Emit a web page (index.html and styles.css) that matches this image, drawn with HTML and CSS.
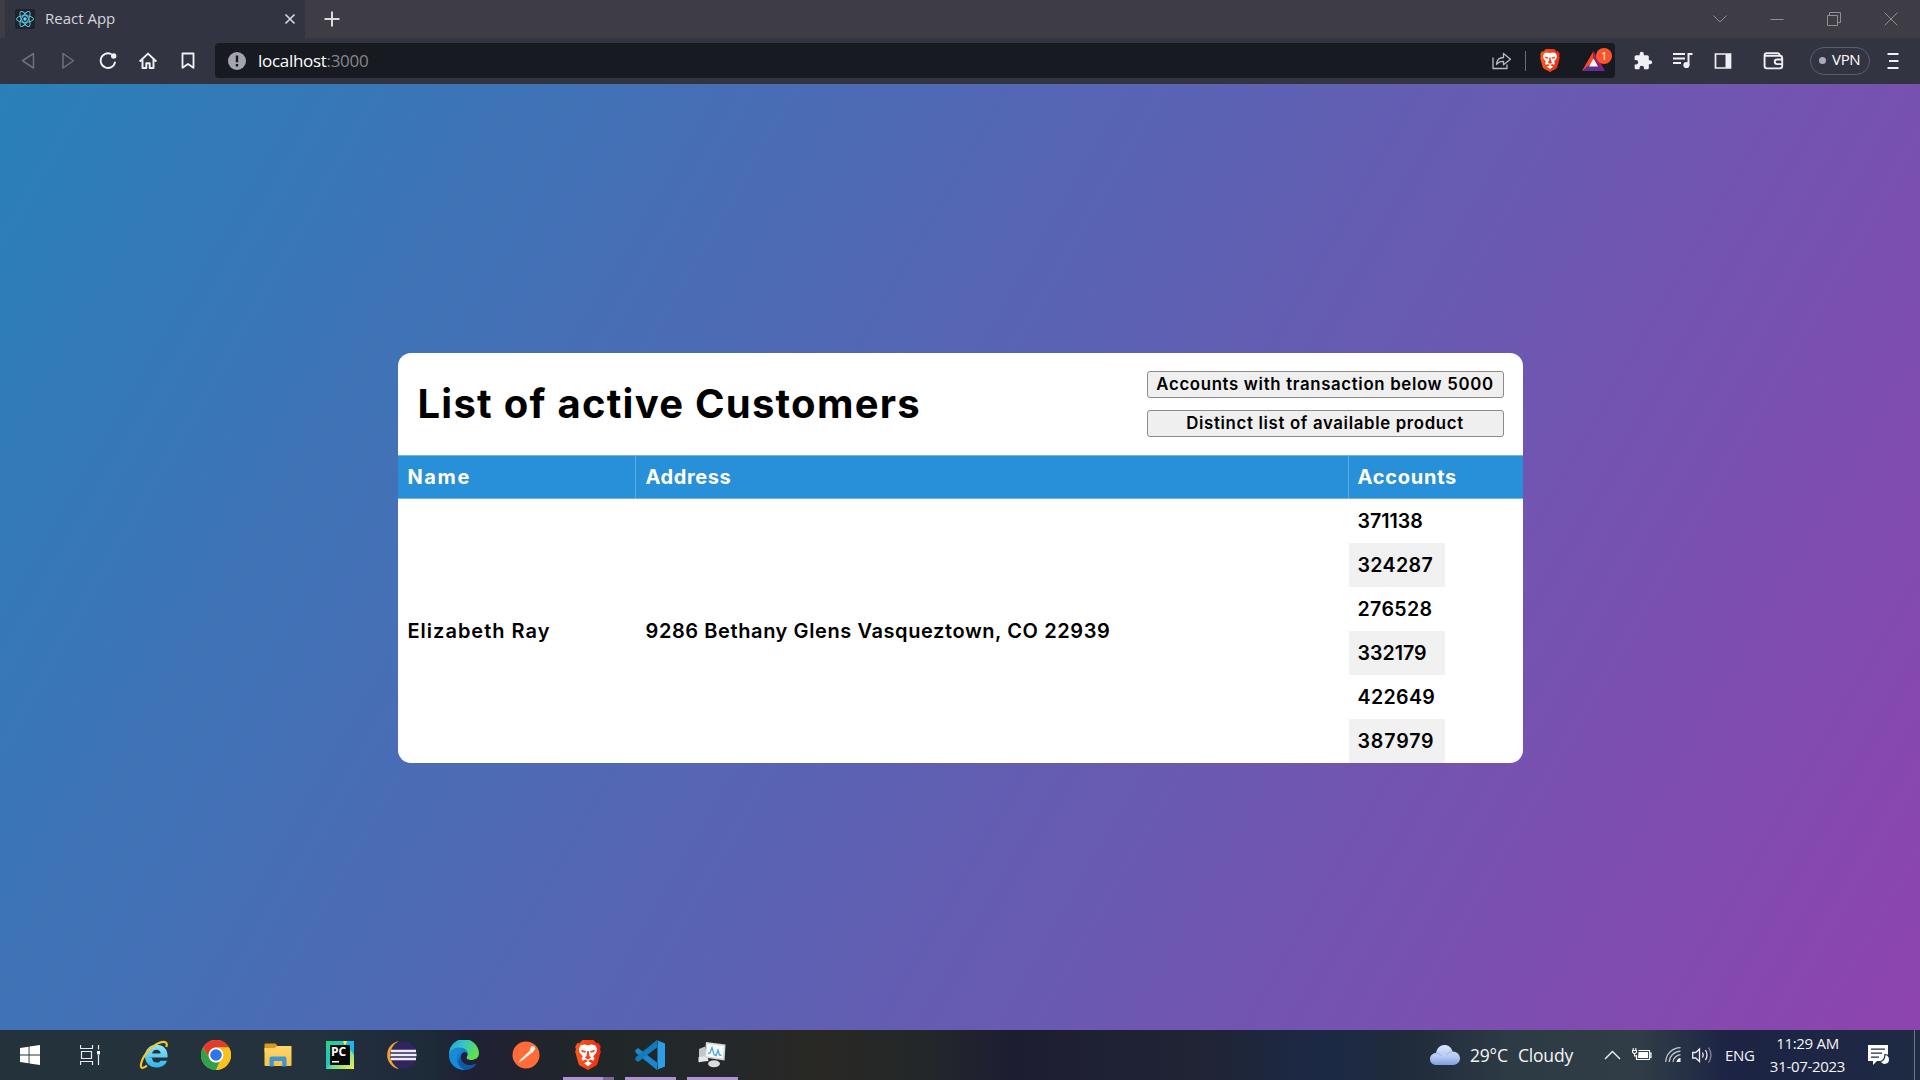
FILE: index.html
```
<!DOCTYPE html>
<html lang="en">
<head>
<meta charset="utf-8">
<title>React App</title>
<link rel="stylesheet" href="styles.css">
</head>
<body>
<svg width="0" height="0" class="defs" aria-hidden="true">
  <defs>
    <linearGradient id="lionBg" x1="0" y1="0" x2="1" y2="0"><stop offset="0" stop-color="#ff5a1c"/><stop offset="1" stop-color="#f02a12"/></linearGradient>
    <linearGradient id="edgeTop" x1="0" y1="0" x2="1" y2="0.4"><stop offset="0" stop-color="#1c9fdc"/><stop offset=".5" stop-color="#36c6c6"/><stop offset="1" stop-color="#62dd52"/></linearGradient>
    <linearGradient id="edgeLow" x1="0" y1="0" x2="1" y2="1"><stop offset="0" stop-color="#1d96e2"/><stop offset="1" stop-color="#0b4f9c"/></linearGradient>
    <linearGradient id="pcBg" x1="0" y1="0" x2="1" y2="1"><stop offset="0" stop-color="#21d789"/><stop offset=".45" stop-color="#20c6c0"/><stop offset=".6" stop-color="#7be08a"/><stop offset="1" stop-color="#f3f04a"/></linearGradient>
    <linearGradient id="cloud" x1="0" y1="0" x2="0" y2="1"><stop offset="0" stop-color="#d8e6fb"/><stop offset=".6" stop-color="#b4c9f2"/><stop offset="1" stop-color="#7f9de0"/></linearGradient>
    <linearGradient id="folder" x1="0" y1="0" x2="0" y2="1"><stop offset="0" stop-color="#ffd76b"/><stop offset="1" stop-color="#f6c445"/></linearGradient>
    <linearGradient id="ie" x1="0" y1="0" x2="0" y2="1"><stop offset="0" stop-color="#8fe6fb"/><stop offset="1" stop-color="#2fb3ea"/></linearGradient>
    <symbol id="lion" viewBox="0 0 26 30">
      <path fill="url(#lionBg)" d="M7.500 0h11l3 3.200 2-.2 2.300 3.800-.8 2.400.8 2.300-3.200 11.800c-.4 1.400-1.200 2-2.300 2.800L13 30l-7.300-3.900c-1.100-.8-1.900-1.400-2.300-2.800L.2 11.500 1 9.200.2 6.800 2.500 3l2 .2z"/>
      <path fill="#fff" d="M13 5.300l3.500-.8 3.700.8 2 3.700-.9 3.700-3 3.500 1.200 2.600-1.200 2-2.500-1.200-2.800 1.500-2.800-1.500-2.500 1.200-1.200-2 1.200-2.600-3-3.500L3.800 9l2-3.700 3.700-.8z"/>
      <path fill="#fff" d="M13 21l4 2.200-4 3-4-3z"/>
      <path fill="#f64119" d="M6 9.800l5 1.400-.7 1.500L7 12zM20 9.800l-5 1.400.7 1.500L19 12zM12.200 11h1.600l.6 5 1.900 1.400L13 19.500l-3.300-2.100 1.900-1.400z"/>
    </symbol>
  </defs>
</svg>

<header class="browser">
  <div class="tabstrip">
    <div class="tab">
      <svg class="favicon" width="20" height="20" viewBox="0 0 20 20"><rect width="20" height="20" rx="2" fill="#20232a"/><g fill="none" stroke="#5cc9e4" stroke-width="1"><ellipse cx="10" cy="10" rx="8.500" ry="3.300"/><ellipse cx="10" cy="10" rx="8.500" ry="3.300" transform="rotate(60 10 10)"/><ellipse cx="10" cy="10" rx="8.500" ry="3.300" transform="rotate(120 10 10)"/></g><circle cx="10" cy="10" r="1.700" fill="#61dafb"/></svg>
      <span class="tab-title">React App</span>
      <svg width="12" height="12" viewBox="0 0 12 12"><path d="M1.500 1.500l9 9m0-9l-9 9" stroke="#d5d5da" stroke-width="1.700"/></svg>
    </div>
    <svg class="new-tab" width="16" height="16" viewBox="0 0 16 16"><path d="M8 .5v15M.5 8h15" stroke="#dcdce0" stroke-width="2"/></svg>
    <div class="window-controls">
      <svg width="14" height="14" viewBox="0 0 14 14"><path d="M.5 3.500L7 10l6.500-6.500"/></svg>
      <svg width="14" height="14" viewBox="0 0 14 14"><path d="M.5 7.500h13"/></svg>
      <svg width="14" height="14" viewBox="0 0 14 14"><path d="M.5 3.500h10v10h-10zM2.500 3.500v-3h11v10h-3"/></svg>
      <svg width="14" height="14" viewBox="0 0 14 14"><path d="M.5.500l13 13m0-13l-13 13"/></svg>
    </div>
  </div>
  <div class="toolbar">
    <div class="nav">
      <svg viewBox="0 0 20 20"><path d="M15.500 2.500v14.500L4.500 9.750z" fill="none" stroke="#6f707c" stroke-width="1.500" stroke-linejoin="round"/></svg>
      <svg viewBox="0 0 20 20"><path d="M5 2.500v14.500l10.500-7.250z" fill="none" stroke="#6f707c" stroke-width="1.500" stroke-linejoin="round"/></svg>
      <svg viewBox="0 0 20 20"><path d="M13 3A7.300 7.300 0 1 0 17 11.500" fill="none" stroke="#f2f2f5" stroke-width="1.900" stroke-linecap="round"/><circle cx="15.700" cy="5" r="2.700" fill="#f2f2f5"/></svg>
      <svg viewBox="0 0 20 20"><path d="M2.200 10L10 2.600 17.800 10M4.500 8.500v8.500h3.800v-4.700h3.400V17h3.800V8.500" fill="none" stroke="#f2f2f5" stroke-width="1.900" stroke-linejoin="round" stroke-linecap="round"/></svg>
      <svg viewBox="0 0 20 20"><path d="M4.500 2.500h11v14.300L10 12.900l-5.500 3.900z" fill="none" stroke="#f2f2f5" stroke-width="1.800" stroke-linejoin="round"/></svg>
    </div>
    <div class="urlbar">
      <svg width="18" height="18" viewBox="0 0 18 18"><circle cx="9" cy="9" r="9" fill="#a4a5ac"/><path d="M7.800 3.500h2.400v6.800H7.800zM7.800 12h2.400v2.400H7.800z" fill="#17181f"/></svg>
      <span class="url">localhost<span class="port">:3000</span></span>
      <svg class="share" width="20" height="18" viewBox="0 0 20 18"><path d="M1 5.500v11h14v-4M4.500 12.500c.3-4.500 3-7 7-7V1.500l7 5.700-7 5.600V9.300c-3.300 0-5.500 1-7 3.200z" fill="none" stroke="#b9bac1" stroke-width="1.300" stroke-linejoin="round"/></svg>
      <span class="divider"></span>
      <svg class="shield" width="20" height="23"><use href="#lion"/></svg>
      <span class="rewards">
        <svg width="23" height="20" viewBox="0 0 23 20"><path d="M11.500 0L0 20l11.500-6z" fill="#ff4724"/><path d="M11.500 0L23 20l-11.500-6z" fill="#9e1f63"/><path d="M0 20h23l-7-6H7z" fill="#662d91"/><path d="M11.500 7.500l4.500 8H7z" fill="#fff"/></svg>
        <span class="badge">1</span>
      </span>
    </div>
    <div class="actions">
      <svg viewBox="0 0 24 24"><path fill="#f0f0f4" d="M20.500 11H19V7c0-1.100-.9-2-2-2h-4V3.500a2.500 2.500 0 0 0-5 0V5H4c-1.100 0-2 .9-2 2v3.800h1.500a2.700 2.700 0 0 1 0 5.400H2V20c0 1.100.9 2 2 2h3.800v-1.500a2.700 2.700 0 0 1 5.400 0V22H17c1.100 0 2-.9 2-2v-4h1.500a2.500 2.500 0 0 0 0-5z"/></svg>
      <svg viewBox="0 0 20 20"><path d="M0 3h12M0 7.500h12M0 12h8" stroke="#f0f0f4" stroke-width="1.900"/><path d="M15.500 14V3h4" fill="none" stroke="#f0f0f4" stroke-width="2"/><circle cx="13.400" cy="14" r="3.100" fill="#f0f0f4"/></svg>
      <svg viewBox="0 0 20 20"><path d="M2.500 3h15v14h-15z" fill="none" stroke="#f0f0f4" stroke-width="1.700"/><path d="M12.500 3h5.500v14h-5.500z" fill="#f0f0f4"/></svg>
      <svg class="wallet" viewBox="0 0 20 20"><path d="M2 5.500h14q2.300 0 2.300 2.300v7.500q0 2.200-2.300 2.200H3.800q-2.300 0-2.300-2.200V5q0-2 2-2H14q2 .3 2 2.500M19 9h-5.500q-2.300 0-2.300 2.200t2.300 2.300H19" fill="none" stroke="#f0f0f4" stroke-width="1.800"/></svg>
      <span class="vpn"><i></i><span class="vpn-label">VPN</span></span>
      <svg class="menu" viewBox="0 0 12 18"><path d="M.5 2h11M2 9h9.500M.5 16h11" stroke="#f0f0f4" stroke-width="1.900"/></svg>
    </div>
  </div>
</header>

<main class="page">
  <section class="card">
    <div class="card-head">
      <h1>List of active Customers</h1>
      <div class="buttons">
        <button>Accounts with transaction below 5000</button>
        <button>Distinct list of available product</button>
      </div>
    </div>
    <div class="row head">
      <div class="name">Name</div><div class="address">Address</div><div class="accounts">Accounts</div>
    </div>
    <div class="row">
      <div class="name">Elizabeth Ray</div>
      <div class="address">9286 Bethany Glens Vasqueztown, CO 22939</div>
      <ul class="account-list">
        <li class="narrow">371138</li><li>324287</li><li>276528</li><li class="narrow">332179</li><li>422649</li><li class="wide">387979</li>
      </ul>
    </div>
  </section>
</main>

<footer class="taskbar">
  <div class="app start"><svg width="20" height="20" viewBox="0 0 20 20"><path fill="#fff" d="M0 2.900l8.600-1.200v7.800H0zM9.500 1.600L20 0v9.500H9.500zM0 10.400h8.600v7.900L0 17.100zM9.500 10.400H20V20L9.500 18.400z"/></svg></div>
  <div class="app view"><svg width="20" height="20" viewBox="0 0 20 20"><path d="M.5 0v3.500h12V0M.5 20v-3.500h12V20M1.500 6.500h10v7h-10zM18.500 0v4.500M18.500 10v10" fill="none" stroke="#e8ecef" stroke-width="1.200"/><path d="M17 6h3v3.500h-3z" fill="#fff"/></svg></div>
  <div class="app"><svg width="30" height="30" viewBox="0 0 30 30"><path d="M9.300 17.500h19.300C29.300 9 24 4.800 17.500 4.800 10.800 4.800 6 9.500 6 16.200S10.800 27.500 17.700 27.500c5 0 8.800-2.500 10.400-6.800h-6.500c-.8 1.300-2.100 1.900-3.800 1.900-2.800 0-4.600-1.800-4.700-4.700M13.200 13.500c.4-2.400 1.900-3.700 4.300-3.700s4 1.300 4.200 3.700z" fill="url(#ie)" fill-rule="evenodd"/><path d="M8 25.500C3.500 29.500.8 28.500 2.400 22.500 4.200 15.500 12 6 20.500 2.700 25.500.8 29 1.800 27.300 7" fill="none" stroke="#f5c62c" stroke-width="2.200"/></svg></div>
  <div class="app"><svg width="30" height="30" viewBox="0 0 30 30"><circle cx="15" cy="15" r="15" fill="#f9c31e"/><path d="M2 7.500A15 15 0 0 1 28 7.500H15A7.500 7.500 0 0 0 8.500 18.700z" fill="#e23b2e"/><path d="M2 7.500L8.500 18.700A7.500 7.500 0 0 0 15 22.500q2 0 3.500-.8L15 30A15 15 0 0 1 2 7.500z" fill="#2fa24c"/><path d="M28 7.500H15a7.500 7.500 0 0 1 6.500 11.200L15 30A15 15 0 0 0 28 7.500z" fill="#f9c31e"/><circle cx="15" cy="15" r="7.400" fill="#fff"/><circle cx="15" cy="15" r="5.800" fill="#2e76e8"/></svg></div>
  <div class="app"><svg width="28" height="24" viewBox="0 0 28 24"><path d="M.5 1.500Q.5.500 1.500.500h10l2 2.500h13.500v6H.5z" fill="#d99b1c"/><path d="M.5 5h10l3-2H27q.5 0 .5.800V22q0 1-1 1h-25q-1 0-1-1z" fill="url(#folder)"/><path d="M5.500 23.500v-8q0-2 2-2h13q2 0 2 2v8h-4.300V18h-8.400v5.500z" fill="#3f94d4"/></svg></div>
  <div class="app"><svg width="28" height="28" viewBox="0 0 28 28"><path d="M0 0h28v28H0z" fill="url(#pcBg)"/><path d="M21 0h7v14l-5-7z" fill="#19b7ef"/><path d="M17 0h4l-2 5z" fill="#f3f04a"/><path d="M4 4h20v20H4z" fill="#080808"/><path d="M6 20h7v1.500H6z" fill="#fff"/><text x="5" y="15" class="pc">PC</text></svg></div>
  <div class="app"><svg width="30" height="28" viewBox="0 0 30 28"><path d="M12 0A14.200 14.200 0 0 0 12 28 16 16 0 0 1 12 0z" fill="#f5a032"/><circle cx="16.500" cy="14" r="13.300" fill="#30265f"/><path d="M4 10h25M3.500 14h26M4 18h25" stroke="#f0edf8" stroke-width="2.300"/></svg></div>
  <div class="app"><svg width="30" height="30" viewBox="0 0 30 30"><path d="M0 15A15 15 0 0 1 30 13c0 5-4 7-8 7s-5-1.500-4-3.500c2-3-1-6-5-6-7 0-13 4.500-13 4.500z" fill="url(#edgeTop)"/><path d="M0 15C1 9 6 7.500 11 7.500c5 0 8 3.500 8 6.500-4-4-8 0-7 5 1 5 7 8 15 4.500A15 15 0 0 1 0 15z" fill="url(#edgeLow)"/><path d="M12.500 11C5 15 6 27 17 29.900 9 31 0 25 0 15c1-4 7-6 12.500-4z" fill="#168bd8"/><path d="M12 17c-1.500 6 6 11.500 15.500 6.500-1.500 3-5.500 6-10.500 6.400C9 27 8 20 12 17z" fill="#1358a6"/></svg></div>
  <div class="app"><svg width="28" height="28" viewBox="0 0 28 28"><circle cx="14" cy="14" r="13.500" fill="#ff6c37"/><path d="M6 22l3-4 8.500-8 2 2-8 6.500zM17.500 9.500l2-3 3 2.300-2.500 3.500z" fill="#fff3ec"/><circle cx="20.800" cy="7.200" r="2.300" fill="#fff3ec"/></svg></div>
  <div class="app active multi"><svg width="26" height="30"><use href="#lion"/></svg></div>
  <div class="app active"><svg width="30" height="30" viewBox="0 0 30 30"><path d="M0 10.500L3 8l19 14.500V30L1 13z" fill="#1b87cf"/><path d="M0 19.500L3 22 22 7.500V0L1 17z" fill="#1579bd"/><path d="M21.500 0L30 3.500v23L21.500 30q2-1 1-4V4q1-3-1-4z" fill="#2a9fe8"/></svg></div>
  <div class="app active"><svg width="28" height="26" viewBox="0 0 28 26"><path d="M1 7l6-2.500 2 13-8 3z" fill="#c4c5c6"/><path d="M.5 15l9-1 1 5-10 1z" fill="#e8e8e8"/><path d="M8 0l19.500 2.500-1 16L6.500 15.500z" fill="#d3d6d8"/><path d="M9.300 1.800L25.800 4l-.9 12.600L8.200 14.200z" fill="#f5fafd"/><path d="M10 11.500l2-.5 2-5.500 2 7 2 1 2-5.500 1.500 5 2 .5" fill="none" stroke="#4aa5dc" stroke-width="1.300"/><ellipse cx="16" cy="21.700" rx="6" ry="3.500" fill="#dcdcdc"/></svg></div>

  <div class="tray">
    <svg class="cloud" width="30" height="20" viewBox="0 0 30 20"><path d="M6.500 20C2.500 20 0 17.500 0 14s3-6 6-6C7 3 10 0 14.500 0c4 0 7 2.500 8 6.500 4.500 0 7.500 3 7.500 6.800S27 20 23 20z" fill="url(#cloud)"/><path d="M6 8q3 0 5 2.500M22.500 6.500q-4 0-5.500 3" fill="none" stroke="#8fa9df" stroke-width=".8"/></svg>
    <span class="temp">29°C</span><span class="sky">Cloudy</span>
    <svg class="chev" width="17" height="10" viewBox="0 0 17 10"><path d="M1 9l7.500-7.500L16 9" fill="none" stroke="#f1f3f4" stroke-width="1.400"/></svg>
    <svg class="battery" width="21" height="14" viewBox="0 0 21 14"><path d="M6.500 2.500h11v9h-13V7M17.500 5H19v4.500h-1.500" fill="none" stroke="#fff" stroke-width="1.200"/><path d="M6.500 4h9.500v6H6z" fill="#fff"/><path d="M1.200 0v2M3.800 0v2M.5 2.500h4v1.700L3.200 5.500H1.800L.5 4.200zM2.500 5.500V8h2" fill="none" stroke="#fff" stroke-width="1.100"/></svg>
    <svg class="wifi" width="17" height="16" viewBox="0 0 17 16"><g fill="none" stroke="#c2c9cf" stroke-width="1.200"><path d="M.7 15C1 7 7 1 15.500.7M4.200 15C4.500 9 9 4.500 15.500 4.200M8 15c.3-4 3.500-7 7.500-7.300"/></g><path d="M11.500 15c0-2 2-4 4-4v4z" fill="#fff"/></svg>
    <svg class="sound" width="20" height="18" viewBox="0 0 20 18"><g fill="none" stroke="#eef0f4" stroke-width="1.300"><path d="M.7 6.500h3L7.500 3v12.500l-3.800-3.500h-3zM10.500 6.500q1.500 2.500 0 5M13.500 4q3 5 0 10"/><path d="M16.500 1.500q5 7.500 0 15" stroke="#858aa0"/></g></svg>
    <span class="lang">ENG</span>
    <div class="clock"><span class="time">11:29 AM</span><span class="date">31-07-2023</span></div>
    <svg class="notes" width="21" height="20" viewBox="0 0 21 20"><path d="M0 0h20v16H9l-4 4v-4H0z" fill="#fff"/><path d="M3 4.200h14M3 8.200h11M3 12.200h8" stroke="#202b48" stroke-width="1.300"/><path d="M17 9.500a5 5 0 1 1-5 7q4.500 0 5-7z" fill="#fff" stroke="#202b48" stroke-width="1.200"/></svg>
  </div>
</footer>
</body>
</html>
```
FILE: styles.css
```
* { box-sizing: border-box; }
body {
  margin: 0;
  width: 1920px;
  height: 1080px;
  overflow: hidden;
  display: flex;
  flex-direction: column;
  font-family: "Open Sans", "Noto Sans", sans-serif;
}
svg { display: block; flex: none; }
.defs { position: absolute; }

/* browser chrome */
.browser { height: 84px; background: #323442; flex: none; }
.tabstrip { height: 38px; background: #3e3d45; display: flex; align-items: center; padding-left: 5px; }
.tab { width: 300px; height: 38px; background: #323442; display: flex; align-items: center; padding: 0 9px 0 10px; }
.tab-title { margin-left: 10px; padding-bottom: 2px; font-size: 15px; color: #d6d6dc; flex: 1; }
.new-tab { margin-left: 19px; }
.window-controls { margin: 0 22px 0 auto; display: flex; gap: 43px; }
.window-controls svg { fill: none; stroke: #8f8f96; stroke-width: 1; }
.toolbar { height: 46px; display: flex; align-items: center; padding-bottom: 1px; }
.nav { display: flex; gap: 20px; padding-left: 17.500px; width: 215px; }
.nav svg { width: 20px; height: 20px; }
.urlbar { width: 1400px; height: 35px; border-radius: 4px; background: #171a21; display: flex; align-items: center; padding-left: 13px; }
.url { margin-left: 12px; padding-bottom: 1px; font-size: 17px; letter-spacing: -0.300px; color: #fff; }
.port { color: #85868d; }
.share { margin-left: auto; }
.divider { width: 1px; height: 20px; background: #696b75; margin: 0 14px 0 13px; }
.rewards { display: block; position: relative; margin: 0 10px 0 22px; width: 23px; }
.badge { position: absolute; left: 14px; top: -3px; width: 16px; height: 16px; border-radius: 50%; background: #fb542b; color: #fff; font-size: 10px; line-height: 16px; text-align: center; }
.actions { display: flex; align-items: center; }
.actions svg { width: 20px; height: 20px; margin-left: 20px; }
.actions svg:first-child { margin-left: 18px; }
.actions .wallet { width: 21px; height: 21px; margin-left: 30px; }
.vpn { margin-left: 26px; width: 60px; height: 28px; border: 1px solid #5b5d6e; border-radius: 14px; display: flex; align-items: center; padding-left: 8px; font-size: 15px; letter-spacing: -0.300px; color: #fff; }
.vpn i { width: 7px; height: 7px; border-radius: 50%; background: #a9aabb; margin-right: 6px; }
.vpn-label { padding-bottom: 3px; }
.actions .menu { width: 12px; height: 18px; margin-left: 16.500px; }

/* app page */
.page { flex: 1; display: flex; align-items: center; justify-content: center; background: linear-gradient(120deg, #2980b9, #8e44ad); font-family: Inter, sans-serif; padding-top: 2px; }
.card { width: 1125px; height: 410px; border-radius: 13px; background: #fff; overflow: hidden; color: #000; }
.card-head { height: 102px; display: flex; align-items: center; justify-content: space-between; padding: 0 19px 0 20px; }
h1 { margin: 0; font-size: 40px; font-weight: 700; letter-spacing: 1.250px; line-height: 48px; }
.buttons { display: flex; flex-direction: column; gap: 12px; width: 357px; }
button { height: 27px; padding: 0 0 1px; border: 1px solid #8b8b8b; border-radius: 3px; background: #efefef; color: #000; font: 600 16.800px/1 Inter, sans-serif; letter-spacing: .670px; }
.row { display: grid; grid-template-columns: 237px 713px 1fr; align-items: center; font-size: 20px; font-weight: 600; letter-spacing: 1px; }
.name, .address, .accounts { padding-left: 10px; }
.head { height: 44px; background: #2790d9; color: #fff; font-weight: 700; border-top: 1px solid #70b5e6; border-bottom: 1px solid #70b5e6; align-items: stretch; line-height: 42px; }
.head .name { letter-spacing: 1.600px; }
.head .address { letter-spacing: .600px; }
.head .accounts { letter-spacing: .750px; }
.head .address, .head .accounts { border-left: 1px solid #5fabe3; padding-left: 10px; }
.head .accounts { padding-left: 9px; }
.row:not(.head) .address { padding-left: 11px; letter-spacing: .590px; }
.account-list { list-style: none; margin: 0; padding: 0 0 0 1px; width: 97px; font-size: 19.600px; }
.account-list li { height: 44px; line-height: 44px; padding-left: 9px; letter-spacing: .350px; }
.account-list li:nth-child(even) { background: #f1f1f1; }
.account-list .narrow { letter-spacing: 0; }
.account-list .wide { letter-spacing: .850px; }

/* taskbar */
.taskbar { height: 50px; flex: none; display: flex; color: #f4f5f7; background: linear-gradient(90deg, #24323c 0, #24323d 320px, #202b3c 380px, #1d2b38 430px, #202036 470px, #20232e 520px, #212729 600px, #24282a 730px, #292824 820px, #23272a 930px, #1d1d32 1010px, #202435 1200px, #1c2945 1320px, #202b3b 1410px, #2d3b45 1510px, #303d47 1640px, #1c2344 1730px, #1e2744 1850px, #1e2b42 1920px); }
.app { width: 62px; display: flex; align-items: center; justify-content: center; flex: none; }
.start { width: 60px; }
.view { width: 60px; margin-right: 3px; }
.active { background: linear-gradient(#b092d2, #b092d2) 50% 100% / 51px 3px no-repeat; }
.multi { background-image: linear-gradient(90deg, #b092d2 40px, #7d6798 40px); }
.pc { font: 700 12px "Open Sans", sans-serif; fill: #fff; }
.tray { margin-left: auto; width: 490px; display: flex; align-items: center; font-size: 17.500px; border-right: 1px solid #6d7587; margin-right: 5px; white-space: nowrap; }
.cloud { margin-left: 5px; }
.temp { margin-left: 10px; width: 48px; letter-spacing: -.200px; }
.sky { width: 56px; letter-spacing: -.200px; }
.chev { margin-left: 30px; }
.battery { margin-left: 11px; }
.wifi { margin-left: 12px; }
.sound { margin-left: 10px; }
.lang { margin-left: 13px; width: 29px; font-size: 15px; letter-spacing: -.300px; }
.clock { margin-left: 15px; width: 77px; display: flex; flex-direction: column; align-items: center; font-size: 15px; line-height: 23px; letter-spacing: -.300px; }
.notes { margin-left: 22px; }
```
